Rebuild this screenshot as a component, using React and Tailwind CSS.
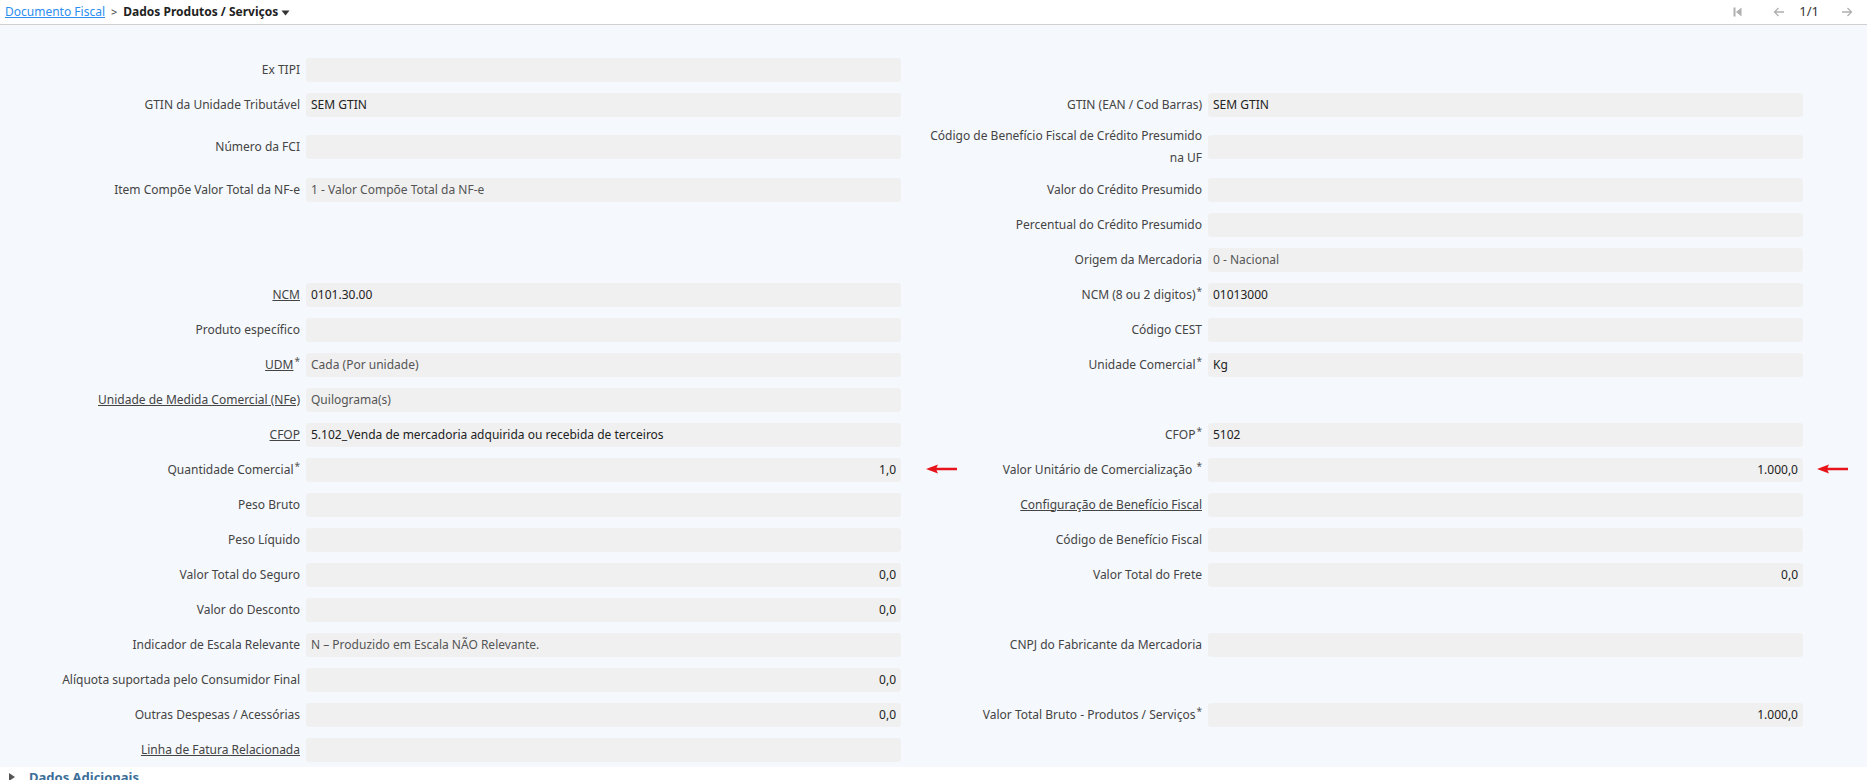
import React from 'react';

// linhas do formulário: [esquerda, direita]
const rows = [
    [{ label: 'Ex TIPI' }, null],
    [{ label: 'GTIN da Unidade Tributável', value: 'SEM GTIN' }, { label: 'GTIN (EAN / Cod Barras)', value: 'SEM GTIN' }],
    [{ label: 'Número da FCI' }, { label: 'Código de Benefício Fiscal de Crédito Presumido na UF' }],
    [{ label: 'Item Compõe Valor Total da NF-e', value: '1 - Valor Compõe Total da NF-e', select: true }, { label: 'Valor do Crédito Presumido' }],
    [null, { label: 'Percentual do Crédito Presumido' }],
    [null, { label: 'Origem da Mercadoria', value: '0 - Nacional', select: true }],
    [{ label: 'NCM', link: true, value: '0101.30.00' }, { label: 'NCM (8 ou 2 digitos)', req: true, value: '01013000' }],
    [{ label: 'Produto específico' }, { label: 'Código CEST' }],
    [{ label: 'UDM', link: true, req: true, value: 'Cada (Por unidade)', select: true }, { label: 'Unidade Comercial', req: true, value: 'Kg' }],
    [{ label: 'Unidade de Medida Comercial (NFe)', link: true, value: 'Quilograma(s)', select: true }, null],
    [{ label: 'CFOP', link: true, value: '5.102_Venda de mercadoria adquirida ou recebida de terceiros' }, { label: 'CFOP', req: true, value: '5102' }],
    [{ label: 'Quantidade Comercial', req: true, value: '1,0', num: true }, { label: 'Valor Unitário de Comercialização ', req: true, value: '1.000,0', num: true }, true],
    [{ label: 'Peso Bruto' }, { label: 'Configuração de Benefício Fiscal', link: true }],
    [{ label: 'Peso Líquido' }, { label: 'Código de Benefício Fiscal' }],
    [{ label: 'Valor Total do Seguro', value: '0,0', num: true }, { label: 'Valor Total do Frete', value: '0,0', num: true }],
    [{ label: 'Valor do Desconto', value: '0,0', num: true }, null],
    [{ label: 'Indicador de Escala Relevante', value: 'N – Produzido em Escala NÃO Relevante.', select: true }, { label: 'CNPJ do Fabricante da Mercadoria' }],
    [{ label: 'Alíquota suportada pelo Consumidor Final', value: '0,0', num: true }, null],
    [{ label: 'Outras Despesas / Acessórias', value: '0,0', num: true }, { label: 'Valor Total Bruto - Produtos / Serviços', req: true, value: '1.000,0', num: true }],
    [{ label: 'Linha de Fatura Relacionada', link: true }, null],
];

const RedArrow = ({ className }) => (
    <svg className={className} width="32" height="10" viewBox="0 0 32 10">
        <path d="M0 5 L12 0.5 L10.5 3.8 L31 3.8 L31 6.2 L10.5 6.2 L12 9.5 Z" fill="#e8141b" />
    </svg>
);

const Field = ({ f, labelClass }) => {
    if (!f) return <div className="w-[901px] shrink-0" />;
    return (
        <div className="flex items-center shrink-0">
            <div className={labelClass + ' text-right text-[#444] leading-[22px] py-[3px] pr-[6px]'}>
                <span className={f.link ? 'underline' : ''}>{f.label}</span>
                {f.req && <span className="relative -top-[4px] text-[10px] text-[#555] ml-[1px]">*</span>}
            </div>
            <div
                className={
                    'w-[595px] h-[24px] bg-[#f0f0f0] rounded-[3px] flex items-center px-[5px] ' +
                    (f.num ? 'justify-end text-[#222]' : f.select ? 'text-[#555]' : 'text-[#222]')
                }
            >
                {f.value}
            </div>
        </div>
    );
};

const App = () => {
    return (
        <div className="w-[1867px] h-[780px] overflow-hidden bg-[#f5f8fc] font-['Noto_Sans',sans-serif] text-[12px] flex flex-col">
            {/* cabeçalho / breadcrumb */}
            <div className="h-[25px] shrink-0 bg-white border-b border-[#cfcfcf] flex items-center justify-between pl-[5px] pr-[14px]">
                <div className="flex items-center text-[12px]">
                    <span className="text-[#2d8ef0] underline">Documento Fiscal</span>
                    <span className="text-[#444] mx-[6px] text-[11px]">&gt;</span>
                    <span className="font-bold text-[#222]">Dados Produtos / Serviços</span>
                    <svg width="9" height="6" viewBox="0 0 9 6" className="ml-[3px] mt-[1px]">
                        <path d="M0.5 0.5 L8.5 0.5 L4.5 5.5 Z" fill="#333" />
                    </svg>
                </div>
                <div className="flex items-center text-[13px] text-[#333]">
                    <svg width="9" height="10" viewBox="0 0 9 10" className="mr-[31px]">
                        <rect x="0.5" y="0.5" width="2" height="9" fill="#b0b0b0" />
                        <path d="M8.5 0.5 L8.5 9.5 L3 5 Z" fill="#b0b0b0" />
                    </svg>
                    <svg width="12" height="10" viewBox="0 0 12 10" className="mr-[14px]">
                        <path d="M11 5 H1.5 M5.5 1 L1.5 5 L5.5 9" stroke="#b0b0b0" strokeWidth="1.3" fill="none" />
                    </svg>
                    <span className="mr-[22px]">1/1</span>
                    <svg width="12" height="10" viewBox="0 0 12 10">
                        <path d="M1 5 H10.5 M6.5 1 L10.5 5 L6.5 9" stroke="#b0b0b0" strokeWidth="1.3" fill="none" />
                    </svg>
                </div>
            </div>

            {/* formulário */}
            <div className="flex-1 pt-[27px] flex flex-col">
                {rows.map(([left, right, arrows], i) => (
                    <div key={i} className="relative flex items-center min-h-[35px]">
                        <Field f={left} labelClass="w-[306px]" />
                        {right && <Field f={right} labelClass="w-[307px] pl-[22px]" />}
                        {arrows && (
                            <>
                                <RedArrow className="absolute left-[926px] top-[12px]" />
                                <RedArrow className="absolute left-[1817px] top-[12px]" />
                            </>
                        )}
                    </div>
                ))}
            </div>

            {/* seção recolhida */}
            <div className="h-[13px] shrink-0 bg-white flex items-start pl-[9px] overflow-hidden">
                <svg width="6" height="8" viewBox="0 0 6 8" className="mt-[6px]">
                    <path d="M0 0 L6 4 L0 8 Z" fill="#555" />
                </svg>
                <span className="ml-[14px] font-bold text-[13px] text-[#3b6e98] leading-[20px]">Dados Adicionais</span>
            </div>
        </div>
    );
};

export default App;
